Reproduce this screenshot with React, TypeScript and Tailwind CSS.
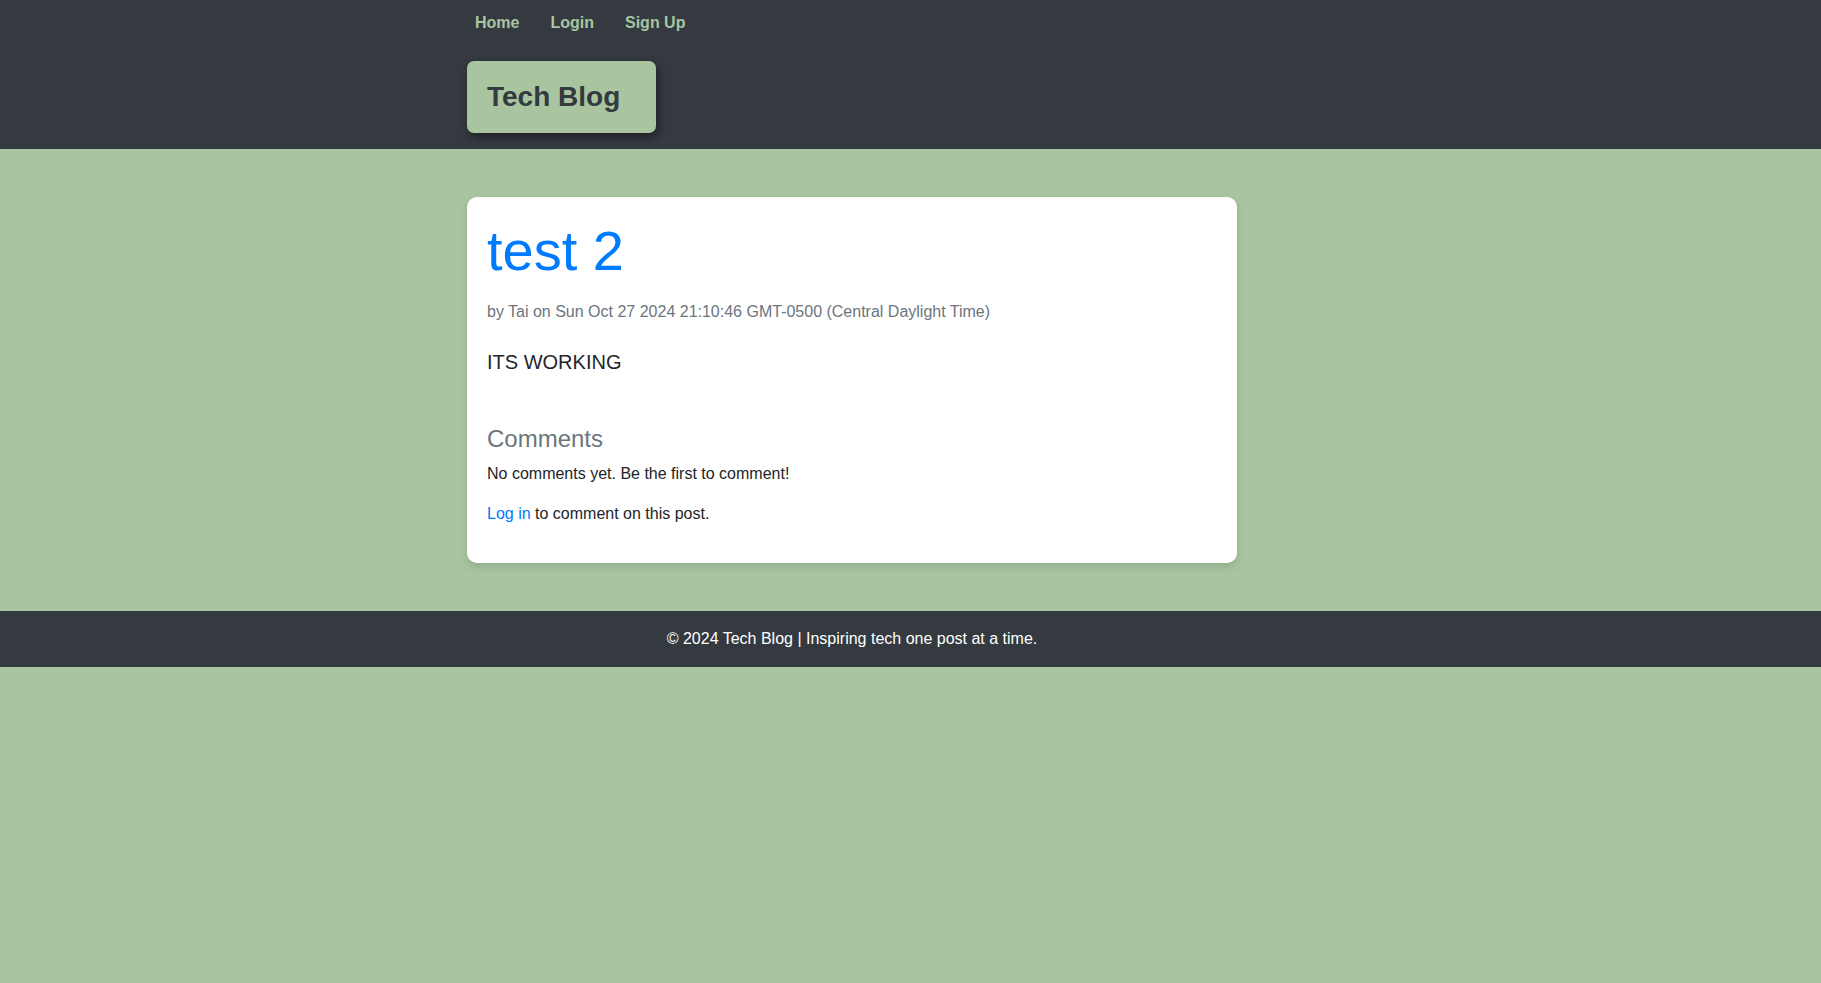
export default function App() {
  return (
    <div className="min-h-[983px] bg-[#a8c5a0] font-['Liberation_Sans',Arial,sans-serif] text-[#212529]">
      <header className="bg-[#343a40] pt-[11px] pb-4">
        <div className="ml-[467px] w-[770px]">
          <nav className="flex gap-[31px] pl-[8px] text-[16px] font-bold leading-6 text-[#a8c5a0]">
            <a href="#">Home</a>
            <a href="#">Login</a>
            <a href="#">Sign Up</a>
          </nav>
          <div className="mt-[26px] inline-block rounded-[7px] bg-[#a8c5a0] pl-5 pr-[36px] py-[19px] shadow-[2px_4px_8px_rgba(0,0,0,0.45)]">
            <h1 className="text-[28px] font-bold leading-[1.2] text-[#343a40]">Tech Blog</h1>
          </div>
        </div>
      </header>
      <main className="py-12">
        <div className="ml-[467px] w-[770px] rounded-[10px] bg-white p-5 shadow-[0_4px_10px_rgba(0,0,0,0.12)]">
          <h2 className="text-[56px] leading-[1.2] text-[#007bff]">test 2</h2>
          <p className="mt-[16px] text-[16px] leading-6 text-[#6c757d]">
            by Tai on Sun Oct 27 2024 21:10:46 GMT-0500 (Central Daylight Time)
          </p>
          <p className="mt-[23px] text-[20px] leading-[30px] text-[#212529]">ITS WORKING</p>
          <h4 className="mt-[48px] text-[24px] leading-[1.2] text-[#6c757d]">Comments</h4>
          <p className="mt-[8px] text-[16px] leading-6">No comments yet. Be the first to comment!</p>
          <p className="mt-[16px] mb-[17px] text-[16px] leading-6">
            <a href="#" className="text-[#007bff]">Log in</a> to comment on this post.
          </p>
        </div>
      </main>
      <footer className="bg-[#343a40] py-4">
        <div className="ml-[467px] w-[770px] text-center text-[16px] leading-6 text-white">
          © 2024 Tech Blog | Inspiring tech one post at a time.
        </div>
      </footer>
    </div>
  );
}
